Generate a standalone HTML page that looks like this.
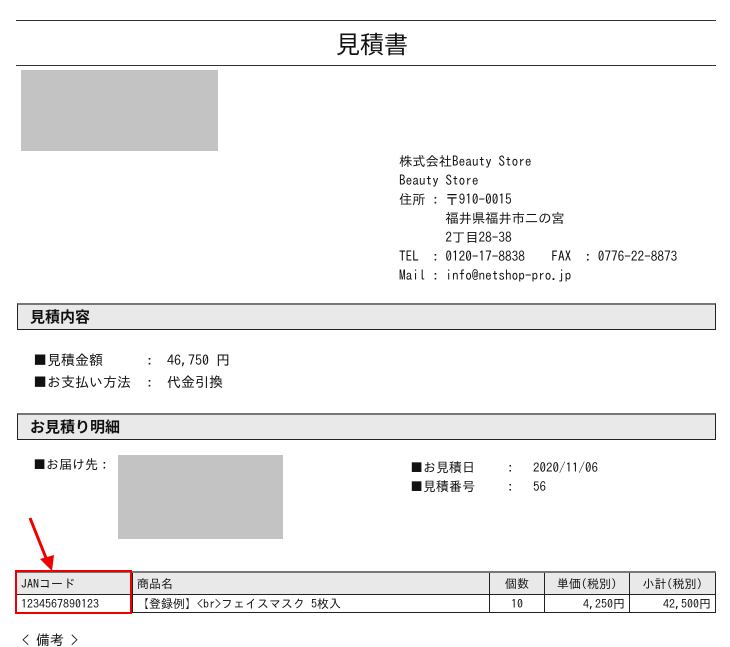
<!DOCTYPE html>
<html><head><meta charset="utf-8"><style>
body{margin:0;width:730px;height:647px;background:#fff;position:relative;font-family:"IPAGothic","Noto Sans CJK JP",sans-serif;color:#111;overflow:hidden}
.a{position:absolute;white-space:nowrap}
.t{font-size:13.25px;line-height:19px}
.bar{position:absolute;left:17px;height:24px;background:#e9e9e9;border:1px solid #222;border-top:2px solid #777;font-family:"Noto Sans CJK JP",sans-serif;font-weight:bold;font-size:15px;line-height:24px;padding-left:12px;box-sizing:content-box;width:685px}
table{position:absolute;left:16px;top:571px;width:700px;border-collapse:collapse;font-size:12px}
td{border:1px solid #222;height:17px;padding:0 4px}
tr.h td{background:#e9e9e9;height:21px;border-top:2px solid #777}
</style></head><body>
<div class="a" style="left:16px;top:20px;width:700px;height:1px;background:#333"></div>
<div class="a" style="left:16px;top:65px;width:700px;height:1px;background:#333"></div>
<div class="a" style="left:7px;width:730px;top:27px;text-align:center;font-size:24px;line-height:32px;font-family:'Noto Sans CJK JP',sans-serif">見積書</div>
<div class="a" style="left:21px;top:70px;width:197px;height:81px;background:#c3c3c3"></div>
<div class="a t" style="left:399px;top:152px">株式会社Beauty Store<br>Beauty Store<br>住所 : 〒910-0015<br>&nbsp; &nbsp; &nbsp; &nbsp;福井県福井市二の宮<br>&nbsp; &nbsp; &nbsp; &nbsp;2丁目28-38<br>TEL&nbsp; : 0120-17-8838 &nbsp; &nbsp;FAX&nbsp; : 0776-22-8873<br>Mail : info@netshop-pro.jp</div>
<div class="bar" style="top:303px">見積内容</div>
<div class="a" style="left:33px;top:349px;font-size:14px;line-height:22px">■見積金額<br>■お支払い方法</div>
<div class="a" style="left:146px;top:349px;font-size:14px;line-height:22px">:&nbsp; 46,750 円<br>:&nbsp; 代金引換</div>
<div class="bar" style="top:413px">お見積り明細</div>
<div class="a" style="left:33px;top:458px;font-size:13px">■お届け先：</div>
<div class="a" style="left:118px;top:455px;width:165px;height:84px;background:#c3c3c3"></div>
<div class="a" style="left:410px;top:458px;font-size:13px;line-height:19px">■お見積日<br>■見積番号</div>
<div class="a" style="left:507px;top:458px;font-size:13px;line-height:19px">:&nbsp; &nbsp;2020/11/06<br>:&nbsp; &nbsp;56</div>
<svg class="a" style="left:26px;top:515px" width="30" height="60"><line x1="4" y1="3" x2="22" y2="48" stroke="#e00" stroke-width="3"/><polygon points="14,44 28,40 26,56" fill="#e00"/></svg>
<table>
<tr class="h"><td style="width:107px">JANコード</td><td>商品名</td><td style="width:46px;text-align:center">個数</td><td style="width:76px;text-align:center">単価(税別)</td><td style="width:77px;text-align:center">小計(税別)</td></tr>
<tr><td>1234567890123</td><td>【登録例】&lt;br&gt;フェイスマスク 5枚入</td><td style="text-align:center">10</td><td style="text-align:right">4,250円</td><td style="text-align:right">42,500円</td></tr>
</table>
<div class="a" style="left:15px;top:570px;width:113px;height:40px;border:2px solid #e00"></div>
<div class="a" style="left:22px;top:633px;font-size:14px">&lt; 備考 &gt;</div>
</body></html>
